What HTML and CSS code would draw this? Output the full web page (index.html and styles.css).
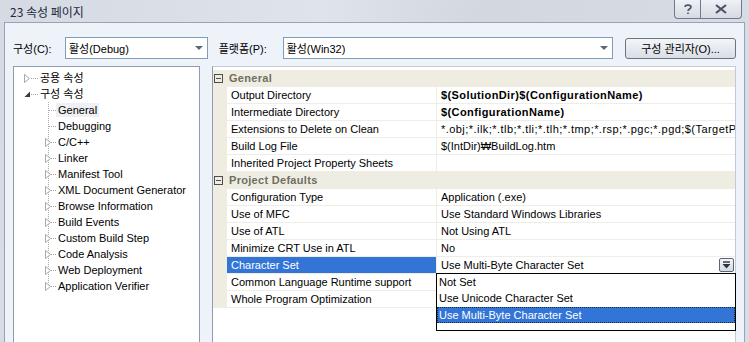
FILE: index.html
```html
<!DOCTYPE html>
<html>
<head>
    <title>23 속성 페이지</title>
    <link rel="stylesheet" href="styles.css">
</head>
<body>
<div class="window">
    <div class="titlebar">
        <span class="title">23 속성 페이지</span>
        <div class="caption-btns">
            <span class="cbtn help">
                <svg width="10" height="12" viewBox="0 0 10 12"><path d="M2 4 C2 1.5 8 1.5 8 4 C8 6 5 6 5 8 M5 9.5 L5 11" fill="none" stroke="#4a5466" stroke-width="1.6"/></svg>
            </span>
            <span class="cbtn close">
                <svg width="14" height="10" viewBox="0 0 14 10"><path d="M2 1 L12 9 M12 1 L2 9" stroke="#4a5466" stroke-width="2.2"/></svg>
            </span>
        </div>
    </div>
    <div class="body">
        <div class="toolbar">
            <label class="tlabel">구성(C):</label>
            <div class="combo combo-cfg"><span>활성(Debug)</span><i class="arr"></i></div>
            <label class="tlabel plat">플랫폼(P):</label>
            <div class="combo combo-plat"><span>활성(Win32)</span><i class="arr"></i></div>
            <button class="mgr">구성 관리자(O)...</button>
        </div>
        <div class="main">
            <div class="tree">
                <ul class="lvl0">
                    <li class="row"><span class="exp"><svg width="7" height="9" viewBox="0 0 7 9"><path d="M0.5 0.5 L5.5 4.5 L0.5 8.5 Z" fill="#fff" stroke="#a8a8a8"/></svg></span><span class="twig"></span><span class="lbl">공용 속성</span></li>
                    <li>
                        <div class="row"><span class="exp"><svg width="7" height="7" viewBox="0 0 7 7"><path d="M6 0.5 L6 6 L0.5 6 Z" fill="#3a3a3a"/></svg></span><span class="twig"></span><span class="lbl">구성 속성</span></div>
                        <ul class="sub">
                            <li><span class="exp"></span><span class="lbl sel">General</span></li>
                            <li><span class="exp"></span><span class="lbl">Debugging</span></li>
                            <li><span class="exp"><svg width="7" height="9" viewBox="0 0 7 9"><path d="M0.5 0.5 L5.5 4.5 L0.5 8.5 Z" fill="#fff" stroke="#a8a8a8"/></svg></span><span class="lbl">C/C++</span></li>
                            <li><span class="exp"><svg width="7" height="9" viewBox="0 0 7 9"><path d="M0.5 0.5 L5.5 4.5 L0.5 8.5 Z" fill="#fff" stroke="#a8a8a8"/></svg></span><span class="lbl">Linker</span></li>
                            <li><span class="exp"><svg width="7" height="9" viewBox="0 0 7 9"><path d="M0.5 0.5 L5.5 4.5 L0.5 8.5 Z" fill="#fff" stroke="#a8a8a8"/></svg></span><span class="lbl">Manifest Tool</span></li>
                            <li><span class="exp"><svg width="7" height="9" viewBox="0 0 7 9"><path d="M0.5 0.5 L5.5 4.5 L0.5 8.5 Z" fill="#fff" stroke="#a8a8a8"/></svg></span><span class="lbl">XML Document Generator</span></li>
                            <li><span class="exp"><svg width="7" height="9" viewBox="0 0 7 9"><path d="M0.5 0.5 L5.5 4.5 L0.5 8.5 Z" fill="#fff" stroke="#a8a8a8"/></svg></span><span class="lbl">Browse Information</span></li>
                            <li><span class="exp"><svg width="7" height="9" viewBox="0 0 7 9"><path d="M0.5 0.5 L5.5 4.5 L0.5 8.5 Z" fill="#fff" stroke="#a8a8a8"/></svg></span><span class="lbl">Build Events</span></li>
                            <li><span class="exp"><svg width="7" height="9" viewBox="0 0 7 9"><path d="M0.5 0.5 L5.5 4.5 L0.5 8.5 Z" fill="#fff" stroke="#a8a8a8"/></svg></span><span class="lbl">Custom Build Step</span></li>
                            <li><span class="exp"><svg width="7" height="9" viewBox="0 0 7 9"><path d="M0.5 0.5 L5.5 4.5 L0.5 8.5 Z" fill="#fff" stroke="#a8a8a8"/></svg></span><span class="lbl">Code Analysis</span></li>
                            <li><span class="exp"><svg width="7" height="9" viewBox="0 0 7 9"><path d="M0.5 0.5 L5.5 4.5 L0.5 8.5 Z" fill="#fff" stroke="#a8a8a8"/></svg></span><span class="lbl">Web Deployment</span></li>
                            <li><span class="exp"><svg width="7" height="9" viewBox="0 0 7 9"><path d="M0.5 0.5 L5.5 4.5 L0.5 8.5 Z" fill="#fff" stroke="#a8a8a8"/></svg></span><span class="lbl">Application Verifier</span></li>
                        </ul>
                    </li>
                </ul>
            </div>
            <div class="grid">
                <div class="cat"><span class="box"></span><span>General</span></div>
                <div class="prow"><span class="g"></span><span class="k">Output Directory</span><span class="v b">$(SolutionDir)$(ConfigurationName)</span></div>
                <div class="prow"><span class="g"></span><span class="k">Intermediate Directory</span><span class="v b">$(ConfigurationName)</span></div>
                <div class="prow"><span class="g"></span><span class="k">Extensions to Delete on Clean</span><span class="v wide">*.obj;*.ilk;*.tlb;*.tli;*.tlh;*.tmp;*.rsp;*.pgc;*.pgd;$(TargetPath)</span></div>
                <div class="prow"><span class="g"></span><span class="k">Build Log File</span><span class="v">$(IntDir)₩BuildLog.htm</span></div>
                <div class="prow"><span class="g"></span><span class="k">Inherited Project Property Sheets</span><span class="v"></span></div>
                <div class="cat"><span class="box"></span><span>Project Defaults</span></div>
                <div class="prow"><span class="g"></span><span class="k">Configuration Type</span><span class="v">Application (.exe)</span></div>
                <div class="prow"><span class="g"></span><span class="k">Use of MFC</span><span class="v">Use Standard Windows Libraries</span></div>
                <div class="prow"><span class="g"></span><span class="k">Use of ATL</span><span class="v">Not Using ATL</span></div>
                <div class="prow"><span class="g"></span><span class="k">Minimize CRT Use in ATL</span><span class="v">No</span></div>
                <div class="prow active"><span class="g"></span><span class="k">Character Set</span><span class="v"><span class="vt">Use Multi-Byte Character Set</span><span class="ddbtn"><svg width="9" height="8" viewBox="0 0 9 8"><path d="M1 1 H8" stroke="#2c3440" stroke-width="1.4"/><path d="M0.5 3 H8.5 L4.5 7.5 Z" fill="#2c3440"/></svg></span></span></div>
                <div class="prow"><span class="g"></span><span class="k">Common Language Runtime support</span><span class="v"></span></div>
                <div class="prow"><span class="g"></span><span class="k">Whole Program Optimization</span><span class="v"></span></div>

                <ul class="droplist">
                    <li>Not Set</li>
                    <li>Use Unicode Character Set</li>
                    <li class="hi">Use Multi-Byte Character Set</li>
                </ul>
            </div>
        </div>
    </div>
</div>
</body>
</html>
```
FILE: styles.css
```css
* { box-sizing: border-box; }
html, body { margin: 0; padding: 0; }
body { font-family: "Liberation Sans", "Noto Sans CJK KR", sans-serif; font-size: 11px; color: #000; }
ul { list-style: none; margin: 0; padding: 0; }

.window { width: 749px; height: 342px; overflow: hidden; background: linear-gradient(100deg, #d5dae3 0%, #dfe3ea 40%, #d2d7e0 60%, #d9dde5 100%); display: flex; flex-direction: column; }

.titlebar { height: 22px; display: flex; align-items: flex-start; padding-left: 10px; flex: none; }
.title { font-size: 12px; color: #1b2840; margin-top: 4px; font-family: "Noto Sans CJK KR", "Liberation Sans", sans-serif; line-height: 15px; }
.caption-btns { margin-left: auto; margin-right: 7px; display: flex; }
.cbtn { height: 19px; border: 1px solid #6f7a8c; border-top: none; background: linear-gradient(#eef1f5, #d6dbe3); display: flex; align-items: center; justify-content: center; }
.cbtn.help { width: 26px; border-radius: 0 0 0 4px; border-right: none; }
.cbtn.close { width: 42px; border-radius: 0 0 4px 0; }

.body { flex: 1; margin: 0 4px; background: #eef2f9; border: 1px solid #98a3b6; border-bottom: none; padding: 14px 8px 0 8px; display: flex; flex-direction: column; }

.toolbar { display: flex; align-items: center; height: 22px; }
.tlabel { font-size: 11px; width: 52px; }
.tlabel.plat { width: 64px; margin-left: 11px; }
.combo { height: 22px; border: 1px solid #7f9db9; background: #fff; display: flex; align-items: center; padding-left: 3px; }
.combo span { flex: 1; }
.combo .arr { width: 0; height: 0; border-left: 4px solid transparent; border-right: 4px solid transparent; border-top: 4px solid #5c6878; margin-right: 4px; }
.combo-cfg { width: 143px; }
.combo-plat { width: 331px; }
.mgr { margin-left: 12px; width: 111px; height: 21px; border: 1px solid #6c7482; border-radius: 3px; background: linear-gradient(#f3f5f8, #d9dee6); font-family: "Liberation Sans", "Noto Sans CJK KR", sans-serif; font-size: 11px; padding: 0; color: #000; }

.main { display: flex; flex: 1; margin-top: 7px; gap: 12px; }

.tree { width: 187px; background: #fff; border: 1px solid #8e9bb0; border-bottom: none; padding-top: 3px; }
.lvl0 > li { padding-left: 10px; }
.row { display: flex; align-items: center; height: 16px; }
.exp { width: 7px; height: 16px; display: flex; align-items: center; justify-content: center; }
.twig { width: 8px; height: 16px; background: repeating-linear-gradient(to right, #a8a8a8 0 1px, transparent 1px 2px) no-repeat 0 8px / 8px 1px; }
.lbl { margin-left: 1px; line-height: 16px; white-space: nowrap; }

.sub { margin-left: 24px; }
.sub > li { display: flex; align-items: center; height: 16px;
    background: repeating-linear-gradient(to bottom, #a8a8a8 0 1px, transparent 1px 2px) no-repeat 0 0 / 1px 16px,
                repeating-linear-gradient(to right, #a8a8a8 0 1px, transparent 1px 2px) no-repeat 1px 8px / 7px 1px; }
.sub > li:last-child { background-size: 1px 8px, 7px 1px; }
.sub .exp { margin-left: -3px; }
.sub .lbl { margin-left: 4px; padding: 0 2px; line-height: 14px; }
.sub .lbl.sel { background: #eef0f3; }

.grid { flex: 1; background: #fff; border-left: 1px solid #8e9bb0; border-top: 1px solid #c8ced8; border-right: 1px solid #c3cad6; padding-top: 3px; position: relative; }
.cat { height: 17px; background: #efede2; display: flex; align-items: center; font-weight: bold; color: #6f6e64; border-bottom: 1px solid #efede2; letter-spacing: 0.3px; }
.cat .box { width: 9px; height: 9px; border: 1px solid #4d4d4d; margin: 0 6px 0 1px; background: linear-gradient(#4d4d4d, #4d4d4d) no-repeat center / 5px 1px; }
.prow { height: 17px; display: grid; grid-template-columns: 14px 210px 1fr; }
.prow .g { background: #efede2; }
.prow .k, .prow .v { border-bottom: 1px solid #efeee6; padding-left: 4px; line-height: 16px; white-space: nowrap; overflow: hidden; }
.prow .k { border-right: 1px solid #efeee6; }
.prow .b { font-weight: bold; letter-spacing: 0.4px; }
.prow .wide { letter-spacing: 0.45px; }
.prow.active .k { background: #3375d7; color: #fff; }
.prow.active .v { display: flex; align-items: center; }
.vt { flex: 1; }
.ddbtn { width: 15px; height: 14px; border: 1px solid #5a6474; border-radius: 2px; background: linear-gradient(#f5f6f8, #d6dae1); display: flex; align-items: center; justify-content: center; margin-right: 1px; }

.droplist { position: absolute; left: 223px; top: 206px; width: 300px; height: 58px; border: 1px solid #000; background: #fff; padding-top: 0; }
.droplist li { height: 16px; line-height: 16px; padding-left: 2px; }
.droplist li.hi { background: #3375d7; color: #fff; outline: 1px dotted #1a2a40; outline-offset: -1px; margin-top: 1px; }
```
